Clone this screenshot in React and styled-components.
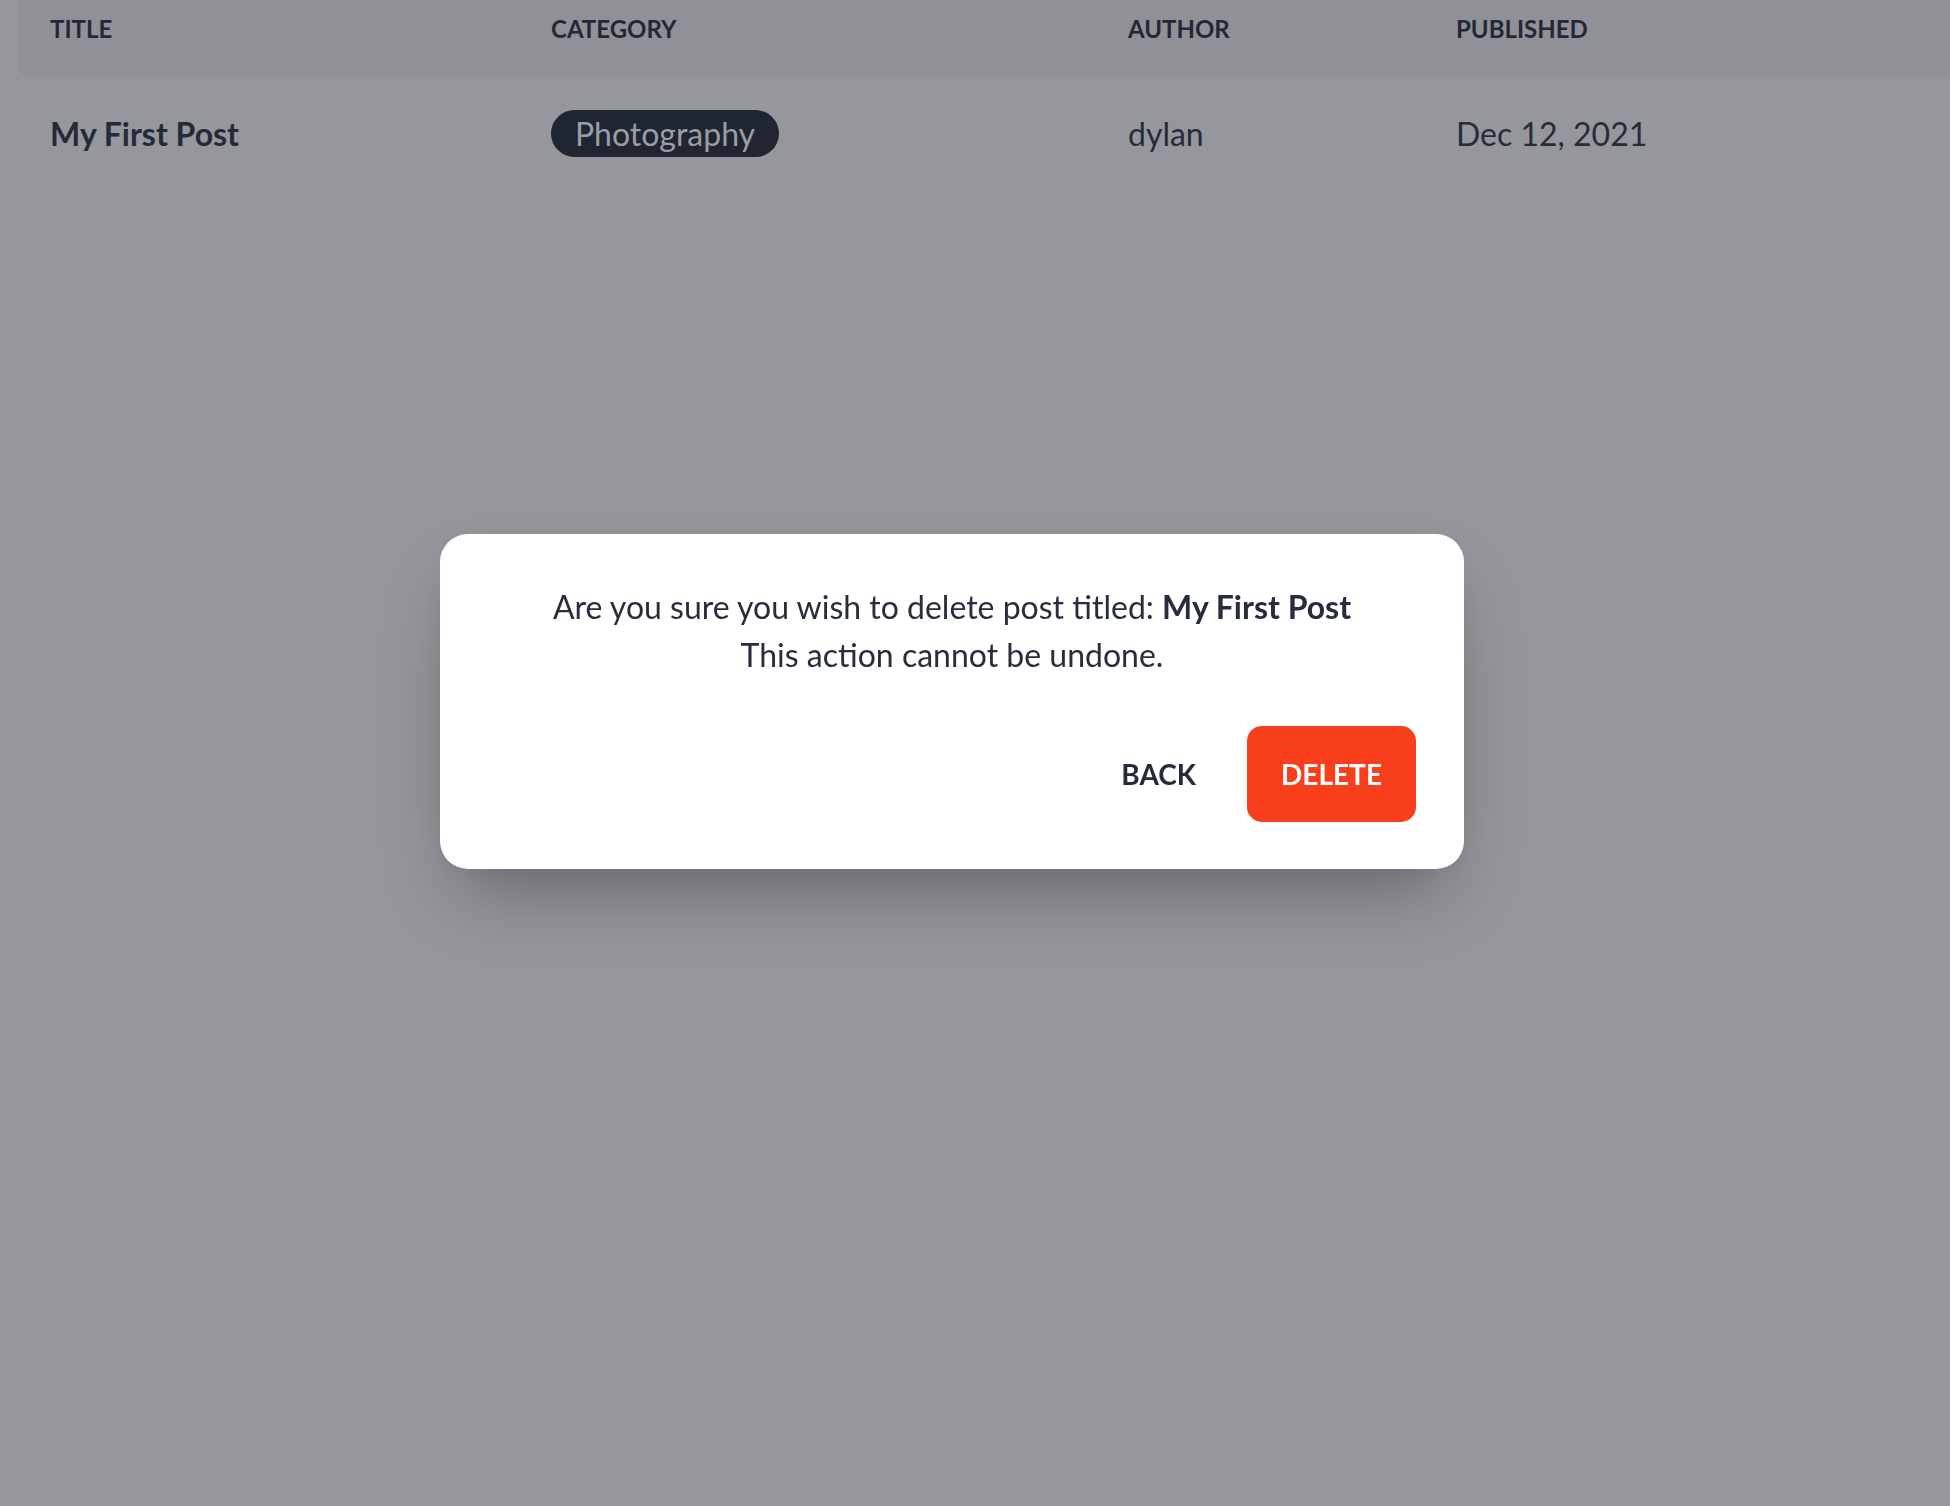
import React from "react";
import styled, { createGlobalStyle } from "styled-components";

const GlobalStyle = createGlobalStyle`
  html, body {
    margin: 0;
    padding: 0;
    background-color: #96979c;
    font-family: Lato, "Open Sans", sans-serif;
    color: #252a37;
  }
`;

const columns = ["Title", "Category", "Author", "Published"];

const App = () => {
  return (
    <>
      <GlobalStyle />
      <Page>
        <HeaderRow>
          {columns.map((c) => (
            <HeaderCell key={c}>{c}</HeaderCell>
          ))}
        </HeaderRow>
        <BodyRow>
          <TitleCell>My First Post</TitleCell>
          <Cell>
            <Pill>Photography</Pill>
          </Cell>
          <Cell>dylan</Cell>
          <Cell>Dec 12, 2021</Cell>
        </BodyRow>
      </Page>
      <Backdrop>
        <Dialog>
          <Message>
            Are you sure you wish to delete post titled: <strong>My First Post</strong>
            <br />
            This action cannot be undone.
          </Message>
          <Actions>
            <Button>Back</Button>
            <Button danger>Delete</Button>
          </Actions>
        </Dialog>
      </Backdrop>
    </>
  );
};

const Page = styled.div`
  min-height: 1506px;
  padding-left: 18px;
`;

const HeaderRow = styled.div`
  display: grid;
  grid-template-columns: 501px 577px 328px 1fr;
  padding: 11px 0 30px 32px;
  background-color: #8f9196;
  border-bottom-left-radius: 12px;
`;

const HeaderCell = styled.div`
  font-size: 24px;
  line-height: 36px;
  font-weight: 700;
  text-transform: uppercase;
  color: #242836;
`;

const BodyRow = styled.div`
  display: grid;
  grid-template-columns: 501px 577px 328px 1fr;
  align-items: center;
  padding: 33px 0 0 32px;
`;

const Cell = styled.div`
  font-size: 32px;
  line-height: 47px;
  color: #272c39;
`;

const TitleCell = styled(Cell)`
  font-weight: 700;
  color: #252a37;
`;

const Pill = styled.span`
  display: inline-block;
  height: 47px;
  line-height: 47px;
  padding: 0 24px;
  border-radius: 24px;
  background-color: #202532;
  color: #9b9da5;
  font-size: 32px;
`;

const Backdrop = styled.div`
  position: fixed;
  inset: 0;
  display: flex;
  align-items: center;
  justify-content: center;
  padding: 0 46px 104px 0;
`;

const Dialog = styled.div`
  width: 1024px;
  box-sizing: border-box;
  padding: 49px 48px 47px;
  background-color: #ffffff;
  border-radius: 28px;
  box-shadow: 0 38px 75px -18px rgba(0, 0, 0, 0.32),
    0 0 30px rgba(0, 0, 0, 0.04);
`;

const Message = styled.p`
  margin: 0;
  text-align: center;
  font-size: 32px;
  line-height: 48px;
  color: #272d3b;
  & strong {
    font-weight: 700;
  }
`;

const Actions = styled.div`
  display: flex;
  justify-content: flex-end;
  gap: 17px;
  margin-top: 47px;
`;

const Button = styled.button`
  height: 96px;
  padding: 0 34px;
  border: none;
  border-radius: 15px;
  font-family: Lato, sans-serif;
  font-size: 28px;
  font-weight: 700;
  text-transform: uppercase;
  cursor: pointer;
  background-color: ${(p) => (p.danger ? "#f83e1b" : "transparent")};
  color: ${(p) => (p.danger ? "#ffffff" : "#252b3a")};
`;

export default App;
